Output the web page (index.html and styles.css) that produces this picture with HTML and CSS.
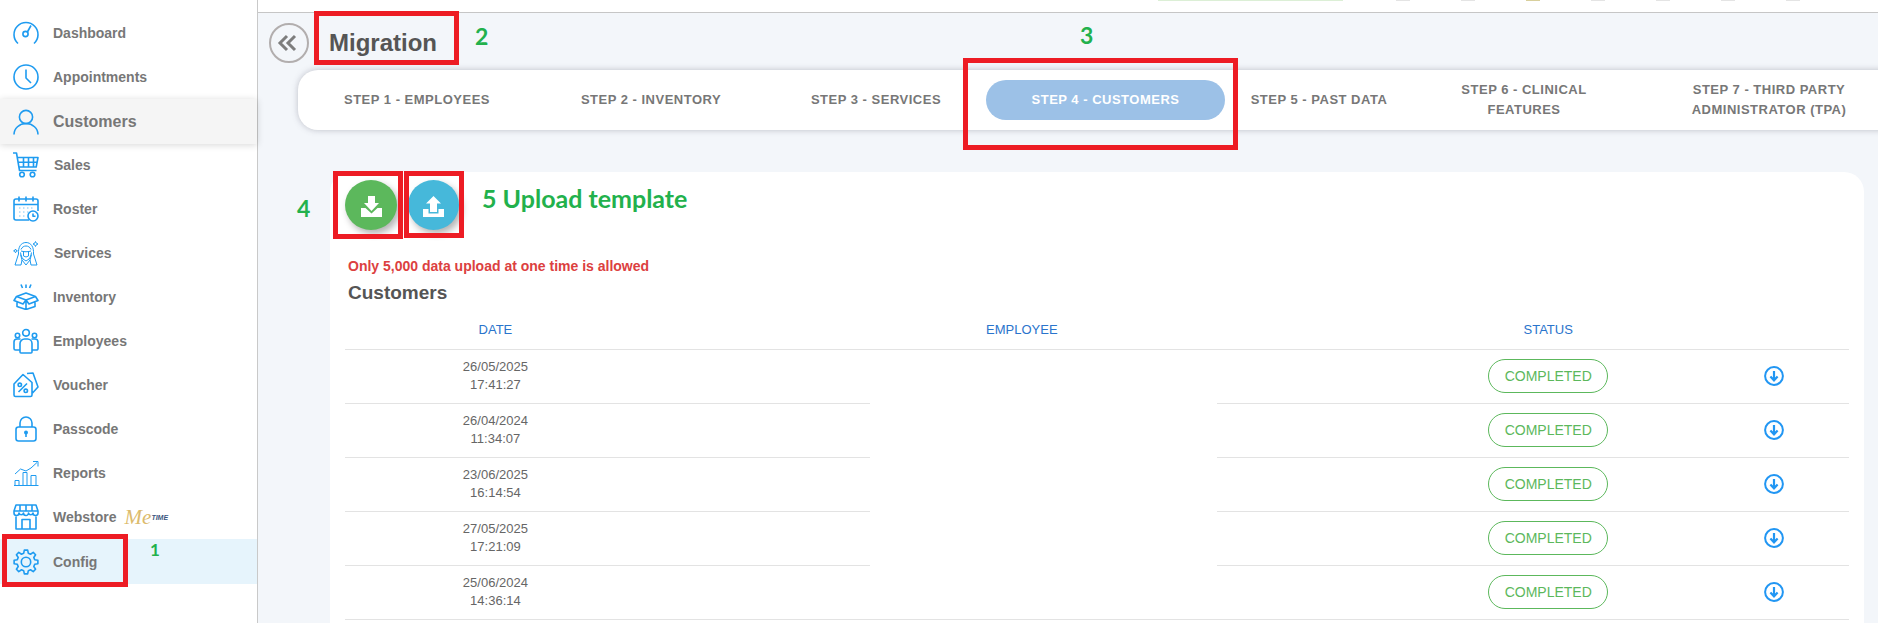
FILE: index.html
```html
<!DOCTYPE html>
<html lang="en">
<head>
<meta charset="utf-8">
<title>Migration</title>
<link rel="stylesheet" href="styles.css">
</head>
<body>
<svg class="defs" width="0" height="0" aria-hidden="true">
  <symbol id="dl" viewBox="0 0 20 20">
    <circle cx="10" cy="10" r="8.9" fill="none" stroke="#2196f3" stroke-width="2"/>
    <path d="M10 5v9M6.4 10.6 10 14.3l3.6-3.7" fill="none" stroke="#2196f3" stroke-width="2.2"/>
  </symbol>
</svg>
<aside class="sidebar">
  <nav class="nav">
    <a class="nav-item"><svg class="ico" viewBox="0 0 26 26"><path d="M5 23.5A12 12 0 1 1 21 23.5"/><circle cx="12.5" cy="14" r="2.6"/><path d="M14.4 12 18 5.5"/></svg><span>Dashboard</span></a>
    <a class="nav-item"><svg class="ico" viewBox="0 0 26 26"><circle cx="13" cy="13" r="12"/><path d="M13 5.5V14l5 5"/></svg><span>Appointments</span></a>
    <a class="nav-item nav-active"><svg class="ico" viewBox="0 0 26 26"><circle cx="13" cy="8" r="6.6"/><path d="M1 25.5a12 11 0 0 1 24 0"/></svg><span>Customers</span></a>
    <a class="nav-item nav-shift"><svg class="ico" viewBox="0 0 26 26"><path d="M0 1h3.5l3 17.5h17M4.500 5.500H25l-1.800 9.500H6M10.500 5.500v9.500M15.500 5.500v9.500M20.500 5.500v9.500M5.500 10.300h19"/><circle cx="9" cy="22.500" r="2.300"/><circle cx="19.500" cy="22.500" r="2.300"/></svg><span>Sales</span></a>
    <a class="nav-item"><svg class="ico" viewBox="0 0 26 26"><path d="M16 24H3a2 2 0 0 1-2-2V5a2 2 0 0 1 2-2h20a2 2 0 0 1 2 2v10M1 8.500h24M6 .5v5M13 .5v5M20 .5v5"/><path class="dots" d="M6 12h1.500M10 12h1.500M14 12h1.500M18 12h1.500M6 16h1.500M10 16h1.500M14 16h1.500M6 20h1.500M10 20h1.500"/><circle cx="20" cy="20" r="5"/><path d="M20 17.500V20.300h2.500"/></svg><span>Roster</span></a>
    <a class="nav-item nav-shift"><svg class="ico thin" viewBox="0 0 26 26"><path d="M8 9.500C9 7 11 6 13 6s4 1 5 3.500M5.500 14C5 7 8 2.500 13 2.500S21 7 20.500 14M7.500 12.500C8 15 8.500 17 10 19l3 2 3-2c1.500-2 2-4 2.500-6.500M8 11c3 1 7 1 10 0M5.500 14 2 25h6l1-5-1.500-5.500M20.500 14 24 25h-6l-1-5 1.500-5.500M9 20l4 5 4-5M10.500 11v5l2.500 1 2.500-1v-5"/><path d="M22.500 1.500l.8 1.700L25 4l-1.700.8-.8 1.700-.8-1.700L20 4l1.700-.8ZM2.500 9l.6 1.300 1.300.6-1.300.6-.6 1.300-.6-1.300L.6 10.900l1.300-.6Z"/></svg><span>Services</span></a>
    <a class="nav-item"><svg class="ico" viewBox="0 0 26 26"><path d="M8 .5l1.500 3.500M13 .5v3.500M18 .5 16.500 4M3.500 12.500 13 9l9.500 3.500L13 16ZM3.500 12.500 1 16.500l9 3.500 3-4 3 4 9-3.500-2.500-4M4 18.500v4L13 25.500l9-3v-4M13 16v9.500"/></svg><span>Inventory</span></a>
    <a class="nav-item"><svg class="ico" viewBox="0 0 26 26"><circle cx="13" cy="4.800" r="3.300"/><circle cx="4.500" cy="7.500" r="2.200"/><circle cx="21.500" cy="7.500" r="2.200"/><path d="M7 24V15.500a4.500 4.500 0 0 1 4.500-4.500h3a4.500 4.500 0 0 1 4.500 4.500V24a1 1 0 0 1-1 1H8a1 1 0 0 1-1-1Z"/><path d="M7 22H2.500A1.500 1.500 0 0 1 1 20.500V14a3 3 0 0 1 3-3h3.500M19 22h4.500a1.500 1.500 0 0 0 1.500-1.500V14a3 3 0 0 0-3-3h-3.500"/></svg><span>Employees</span></a>
    <a class="nav-item"><svg class="ico" viewBox="0 0 26 26"><path d="M1 12 10 2.500 19 10.500V23a1.500 1.500 0 0 1-1.500 1.500h-15A1.500 1.500 0 0 1 1 23ZM14 1.500l6-.5 5 14-5.500 6M10 6.500v.1"/><path d="M5.500 20 14 11.500"/><circle cx="6.800" cy="12.800" r="1.700"/><circle cx="12.800" cy="18.800" r="1.700"/></svg><span>Voucher</span></a>
    <a class="nav-item"><svg class="ico" viewBox="0 0 26 26"><rect x="3" y="11" width="20" height="14" rx="2.500"/><path d="M7 11V7a6 6 0 0 1 12 0v4"/><circle class="solid" cx="13" cy="16.500" r="2"/><path d="M13 18v3"/></svg><span>Passcode</span></a>
    <a class="nav-item"><svg class="ico thin" viewBox="0 0 26 26"><path d="M1 25.500h24.500M2 25.500v-5h4v5M10 25.500V12.500h4v13M18 25.500v-10h5v10M2 14l5.500-5 5.500 2 5-3 6-5.500M20 1.500h5v5"/></svg><span>Reports</span></a>
    <a class="nav-item"><svg class="ico" viewBox="0 0 26 26"><path d="M3 1h20l2 6v2a2.500 2.500 0 0 1-5 0 2.300 2.300 0 0 1-4.500 0 2.500 2.500 0 0 1-5 0 2.300 2.300 0 0 1-4.500 0 2.500 2.500 0 0 1-5 0V7ZM1 7h24M7 1v6M13 1v6M19 1v6M3 12.500V25h20V12.500M9 25V15.500h8V25"/></svg><span>Webstore</span><span class="brand"><span class="brand-me">Me</span><span class="brand-time">TIME</span></span></a>
    <a class="nav-item nav-current"><svg class="ico" viewBox="0 0 26 26"><path d="M10.670 4.310 11.330 1.120H14.670L15.330 4.310 17.500 5.210 20.220 3.410 22.590 5.780 20.790 8.500 21.690 10.670 24.880 11.330V14.670L21.690 15.330 20.790 17.500 22.590 20.220 20.220 22.590 17.500 20.790 15.330 21.690 14.670 24.880H11.330L10.670 21.690 8.500 20.790 5.780 22.590 3.410 20.220 5.210 17.500 4.310 15.330 1.120 14.670V11.330L4.310 10.670 5.210 8.500 3.410 5.780 5.780 3.410 8.500 5.210Z"/><circle cx="13" cy="13" r="4.700"/></svg><span>Config</span></a>
  </nav>
</aside>
<main class="main">
  <header class="topbar">
    <span class="top-pill"></span>
    <span class="top-tick"></span><span class="top-tick"></span><span class="top-tick top-tick-gold"></span><span class="top-tick"></span><span class="top-tick"></span><span class="top-tick"></span><span class="top-tick"></span>
  </header>
  <div class="title-row">
    <button class="back" type="button"><svg viewBox="0 0 22 18" width="22" height="18"><path d="M10 2 3 9l7 7M18 2l-7 7 7 7" fill="none" stroke="#7d7d7d" stroke-width="3"/></svg></button>
    <h1 class="title">Migration</h1>
  </div>
  <div class="steps">
    <a class="step">STEP 1 - EMPLOYEES</a>
    <a class="step">STEP 2 - INVENTORY</a>
    <a class="step">STEP 3 - SERVICES</a>
    <a class="step step-active">STEP 4 - CUSTOMERS</a>
    <a class="step">STEP 5 - PAST DATA</a>
    <a class="step step-wide">STEP 6 - CLINICAL FEATURES</a>
    <a class="step step-wider">STEP 7 - THIRD PARTY ADMINISTRATOR (TPA)</a>
  </div>
  <section class="card">
    <div class="actions">
      <button class="fab fab-green" type="button"><svg viewBox="0 0 21 21" width="21" height="21"><path d="M7 0h7v7h4l-7.500 8L3 7h4Z" fill="#fff"/><path d="M0 12h4.500l6 5.500 6-5.500H21v9H0Z" fill="#fff"/></svg></button>
      <button class="fab fab-blue" type="button"><svg viewBox="0 0 21 21" width="21" height="21"><path d="M10.500 0 18 7.500h-4V16H7V7.500H3Z" fill="#fff"/><path d="M0 13h5.500v4.500h10V13H21v8H0Z" fill="#fff"/></svg></button>
    </div>
    <p class="limit">Only 5,000 data upload at one time is allowed</p>
    <h2 class="card-title">Customers</h2>
    <div class="table-wrap">
      <table class="table">
        <colgroup><col class="col-date"><col class="col-emp"><col class="col-status"><col class="col-act"></colgroup>
        <thead><tr><th>DATE</th><th>EMPLOYEE</th><th>STATUS</th><th></th></tr></thead>
        <tbody>
          <tr><td>26/05/2025<br>17:41:27</td><td></td><td><span class="badge">COMPLETED</span></td><td><svg class="dl"><use href="#dl"/></svg></td></tr>
          <tr><td>26/04/2024<br>11:34:07</td><td></td><td><span class="badge">COMPLETED</span></td><td><svg class="dl"><use href="#dl"/></svg></td></tr>
          <tr><td>23/06/2025<br>16:14:54</td><td></td><td><span class="badge">COMPLETED</span></td><td><svg class="dl"><use href="#dl"/></svg></td></tr>
          <tr><td>27/05/2025<br>17:21:09</td><td></td><td><span class="badge">COMPLETED</span></td><td><svg class="dl"><use href="#dl"/></svg></td></tr>
          <tr><td>25/06/2024<br>14:36:14</td><td></td><td><span class="badge">COMPLETED</span></td><td><svg class="dl"><use href="#dl"/></svg></td></tr>
        </tbody>
      </table>
      <div class="redaction"></div>
    </div>
  </section>
</main>
<div class="mark mark-config"></div>
<div class="mark mark-title"></div>
<div class="mark mark-step"></div>
<div class="mark mark-down"></div>
<div class="mark mark-up"></div>
<span class="note note-1">1</span>
<span class="note note-2">2</span>
<span class="note note-3">3</span>
<span class="note note-4">4</span>
<span class="note note-5">5 Upload template</span>
</body>
</html>
```

FILE: styles.css
```css
* { box-sizing: border-box; }
html, body { height: 623px; }
body {
  position: relative;
  margin: 0;
  display: flex;
  overflow: hidden;
  background: #fff;
  font-family: "Liberation Sans", Arial, sans-serif;
  color: #666;
}
.defs { position: absolute; }

/* Sidebar */
.sidebar {
  flex: 0 0 258px;
  height: 623px;
  padding-top: 11px;
  background: #fff;
  border-right: 1px solid #c9c9c9;
  position: relative;
  z-index: 1;
}
.nav { display: flex; flex-direction: column; }
.nav-item {
  display: flex;
  align-items: center;
  gap: 14px;
  height: 44px;
  padding-left: 13px;
  font-size: 14px;
  font-weight: 700;
  color: #777;
}
.nav-shift { gap: 15px; }
.nav-active {
  height: 45px;
  margin-bottom: -1px;
  font-size: 16px;
  background: #f5f5f5;
  box-shadow: 0 1px 7px rgba(0, 0, 0, .16);
}
.nav-current { height: 45px; background: #e6f4fc; }
.ico {
  flex: 0 0 26px;
  width: 26px;
  height: 26px;
  fill: none;
  stroke: #1e9bf0;
  stroke-width: 1.6;
  stroke-linejoin: round;
}
.ico.thin { stroke-width: 1; }
.ico .dots { stroke-width: 1; stroke: #7cc4f5; }
.ico .solid { fill: #1e9bf0; stroke: none; }
.brand { display: flex; align-items: center; margin-left: -10px; padding-left: 4px; font-weight: 400; }
.brand-me {
  font-family: "Liberation Serif", serif;
  font-style: italic;
  font-size: 21px;
  line-height: 20px;
  color: #dcbb6c;
}
.brand-time {
  margin-left: 0;
  font-size: 7px;
  font-weight: 700;
  font-style: italic;
  color: #3b5680;
}

/* Main */
.main {
  flex: 1;
  min-width: 0;
  height: 623px;
  background: #f3f6fa;
}
.topbar {
  display: flex;
  align-items: flex-start;
  gap: 51px;
  height: 13px;
  padding-left: 900px;
  background: #fff;
  border-bottom: 1px solid #c6c6c6;
}
.top-pill {
  flex: 0 0 185px;
  height: 1px;
  margin-right: 2px;
  background: #dcefd6;
}
.top-tick { flex: 0 0 14px; height: 1px; background: #e4e4e4; }
.top-tick-gold { background: #d8cf9c; }
.title-row {
  display: flex;
  align-items: center;
  gap: 20px;
  height: 40px;
  margin: 10px 0 7px 11px;
}
.back {
  flex: 0 0 40px;
  display: flex;
  align-items: center;
  justify-content: center;
  height: 40px;
  padding: 0 2px 0 0;
  background: transparent;
  border: 2px solid #b2aeae;
  border-radius: 50%;
}
.title {
  margin: 0;
  font-size: 24px;
  font-weight: 700;
  color: #555;
}

/* Steps */
.steps {
  display: grid;
  grid-template-columns: 238px 230px 220px 239px 188px 222px 268px;
  align-items: center;
  width: 1620px;
  height: 60px;
  margin-left: 40px;
  background: #fff;
  border-radius: 20px 0 0 20px;
  box-shadow: 0 0 6px rgba(90, 90, 110, .35);
}
.step {
  text-align: center;
  font-size: 13px;
  font-weight: 700;
  line-height: 20px;
  letter-spacing: .5px;
  color: #777;
}
.step-active {
  height: 40px;
  line-height: 40px;
  color: #fff;
  background: #9cc1e7;
  border-radius: 20px;
}
.step-wide { padding: 0 30px; }
.step-wider { padding: 0 50px; }

/* Card */
.card {
  height: 451px;
  margin: 42px 14px 0 72px;
  padding: 8px 15px 0;
  background: #fff;
  border-radius: 20px 20px 0 0;
}
.actions { display: flex; gap: 11px; }
.fab {
  display: flex;
  align-items: center;
  justify-content: center;
  width: 52px;
  height: 50px;
  padding: 3px 0 0;
  border: 0;
  border-radius: 50%;
  box-shadow: 3px 4px 7px rgba(0, 0, 0, .3);
}
.fab-green { background: #5cb85c; }
.fab-blue { width: 51px; background: #46b8da; }
.limit {
  margin: 27px 0 0 3px;
  font-size: 14px;
  font-weight: 700;
  line-height: 18px;
  color: #dc4040;
}
.card-title {
  margin: 6px 0 0 3px;
  font-size: 19px;
  font-weight: 700;
  line-height: 24px;
  color: #555;
}
.table-wrap { position: relative; margin-top: 5px; }
.table {
  width: 100%;
  table-layout: fixed;
  border-collapse: collapse;
  font-size: 13px;
  color: #666;
}
.col-date, .col-status { width: 20%; }
.col-emp { width: 50%; }
.col-act { width: 10%; }
.table th {
  height: 39px;
  padding: 0;
  font-weight: 400;
  color: #2a74cc;
  border-bottom: 1px solid #e3e3e3;
}
.table td {
  height: 54px;
  padding: 0;
  line-height: 18px;
  text-align: center;
  border-bottom: 1px solid #e3e3e3;
}
.badge {
  display: inline-block;
  width: 120px;
  height: 34px;
  font-size: 14px;
  line-height: 32px;
  color: #5cb85c;
  border: 1px solid #5cb85c;
  border-radius: 17px;
  vertical-align: middle;
}
.dl { display: block; width: 20px; height: 20px; margin: 0 auto; }
.redaction {
  position: absolute;
  top: 40px;
  left: 525px;
  width: 347px;
  height: 262px;
  background: #fff;
}

/* Screenshot annotations */
.mark {
  position: absolute;
  z-index: 3;
  border: 5px solid #ed1c24;
}
.mark-config { left: 2px; top: 534px; width: 126px; height: 53px; }
.mark-title { left: 314px; top: 11px; width: 145px; height: 54px; }
.mark-step { left: 963px; top: 58px; width: 275px; height: 92px; }
.mark-down { left: 333px; top: 171px; width: 70px; height: 68px; }
.mark-up { left: 404px; top: 171px; width: 60px; height: 67px; }
.note {
  position: absolute;
  z-index: 3;
  font-family: Lato, "Open Sans", sans-serif;
  font-weight: 700;
  font-size: 23px;
  line-height: 24px;
  color: #22b14c;
}
.note-1 { left: 150px; top: 538px; font-size: 17px; }
.note-2 { left: 475px; top: 24px; }
.note-3 { left: 1080px; top: 23px; }
.note-4 { left: 297px; top: 196px; }
.note-5 { left: 482px; top: 186px; font-size: 25px; }
```
